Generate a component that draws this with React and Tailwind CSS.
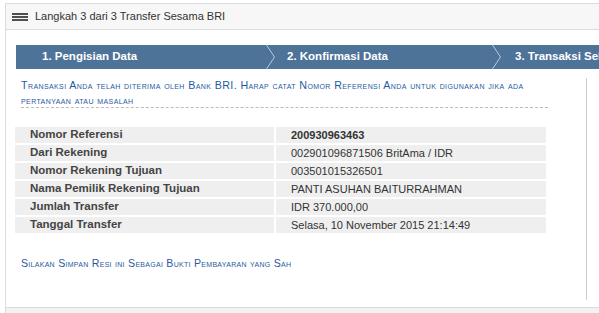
export default function App() {
  const rows = [
    ["Nomor Referensi", "200930963463", true],
    ["Dari Rekening", "002901096871506 BritAma / IDR", false],
    ["Nomor Rekening Tujuan", "003501015326501", false],
    ["Nama Pemilik Rekening Tujuan", "PANTI ASUHAN BAITURRAHMAN", false],
    ["Jumlah Transfer", "IDR 370.000,00", false],
    ["Tanggal Transfer", "Selasa, 10 November 2015 21:14:49", false],
  ];
  const Chevron = () => (
    <svg width="10" height="24" viewBox="0 0 10 24" className="shrink-0">
      <polyline points="0.5,0 8.5,12 0.5,24" fill="none" stroke="#b7c9da" strokeWidth="1" />
    </svg>
  );
  return (
    <div className="w-[599px] h-[313px] overflow-hidden bg-white pt-[3px] pl-[5px] font-['Liberation_Sans',Arial,sans-serif]">
      <div className="flex flex-col border-l border-t border-[#dcdcdc] h-[310px]">
        <div className="h-[26px] shrink-0 bg-[#f7f7f7] border-b border-[#dcdcdc] flex items-center pl-[6px]">
          <svg width="16" height="8" viewBox="0 0 16 8" className="shrink-0">
            <rect x="0" y="0" width="16" height="2" fill="#505050" />
            <rect x="0" y="3" width="16" height="2" fill="#505050" />
            <rect x="0" y="6" width="16" height="2" fill="#505050" />
          </svg>
          <span className="ml-[7px] text-[11px] text-[#333] leading-none">Langkah 3 dari 3 Transfer Sesama BRI</span>
        </div>
        <div className="flex-1 flex flex-col pl-[10px] pt-[15px]">
          <div className="h-[24px] shrink-0 bg-[#4e7398] flex items-center text-white font-bold text-[11.5px] whitespace-nowrap w-[600px] overflow-hidden">
            <div className="w-[250px] shrink-0 pl-[26px]">1. Pengisian Data</div>
            <Chevron />
            <div className="w-[216px] shrink-0 pl-[11px]">2. Konfirmasi Data</div>
            <Chevron />
            <div className="shrink-0 pl-[13px]">3. Transaksi Selesai</div>
          </div>
          <div className="mt-[9px] w-[571px] h-[222px] border-r border-[#cccccc] flex flex-col">
            <div className="ml-[5px] w-[527px] h-[30px] border-b border-dashed border-[#bbbbbb] text-[10.7px] tracking-[0.4px] leading-[15px] text-[#1f5aa0] [font-variant-caps:small-caps] whitespace-nowrap">
              <div>Transaksi Anda telah diterima oleh Bank BRI. Harap catat Nomor Referensi Anda untuk digunakan jika ada</div>
              <div>pertanyaan atau masalah</div>
            </div>
            <div className="mt-[19px] -ml-[1px] grid grid-cols-[259px_270px] gap-[2px]">
              {rows.map(([l, v, b]) => (
                <div key={l} className="contents">
                  <div className="h-[16px] bg-[#efefef] flex items-center pl-[15px] text-[11.5px] font-bold text-[#444] whitespace-nowrap">{l}</div>
                  <div className={`h-[16px] bg-[#efefef] flex items-center pl-[15px] text-[11px] text-[#333] whitespace-nowrap ${b ? "font-bold" : ""}`}>{v}</div>
                </div>
              ))}
            </div>
            <div className="mt-[23px] ml-[5px] text-[10.6px] tracking-[0.28px] leading-[15px] text-[#1f5aa0] [font-variant-caps:small-caps] whitespace-nowrap">
              Silakan Simpan Resi ini Sebagai Bukti Pembayaran yang Sah
            </div>
          </div>
          <div className="mt-[7px] -ml-[10px] flex-1 border-t border-[#dcdcdc] bg-[#f2f2f2]"></div>
        </div>
      </div>
    </div>
  );
}
